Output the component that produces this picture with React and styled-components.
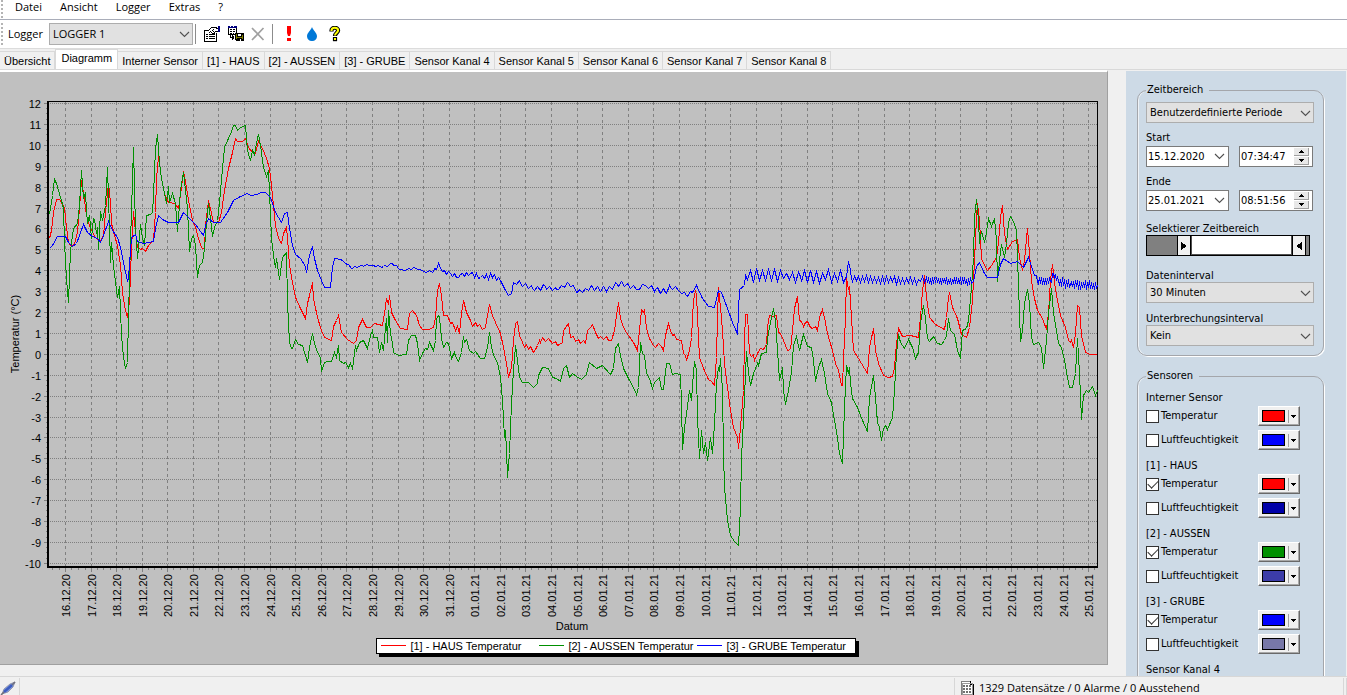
import React, { useState } from 'react';
import styled, { createGlobalStyle } from 'styled-components';

const GlobalStyle = createGlobalStyle`
    * {
        box-sizing: border-box;
    }

    body {
        margin: 0;
        background: #f0f0f0;
        color: #000;
        font: 11px/14px "DejaVu Sans Condensed", "DejaVu Sans", sans-serif;
    }

    button, input, select {
        font: inherit;
        color: inherit;
        margin: 0;
    }
`;

const uiFont = '"Open Sans", "Noto Sans", sans-serif';
const chartFont = '"Liberation Sans", Arial, sans-serif';

const Window = styled.div`
    display: flex;
    flex-direction: column;
    height: 100vh;
    overflow: hidden;
`;

const MenuBar = styled.nav`
    display: flex;
    align-items: center;
    height: 20px;
    padding: 0 0 5px 6px;
    background: #fff;
    border-bottom: 1px solid #a9adb9;
    font-family: ${uiFont};
`;

const MenuItem = styled.button`
    border: 0;
    padding: 0 9px;
    background: none;
    font-size: 11px;
`;

const ToolBar = styled.div`
    display: flex;
    align-items: center;
    height: 29px;
    padding: 0 8px;
    background: #fff;
    border-bottom: 1px solid #dcdcdc;
    font-family: ${uiFont};
`;

const ToolLabel = styled.label`
    width: 41px;
`;

const ToolButton = styled.button`
    display: flex;
    border: 0;
    padding: 0;
    margin-left: ${(p) => p.$gap || 7}px;
    background: none;

    svg {
        display: block;
    }
`;

const Separator = styled.div`
    width: 1px;
    height: 20px;
    margin-left: ${(p) => p.$gap || 2}px;
    background: #8c8c8c;
`;

const SelectBox = styled.div`
    position: relative;
    width: ${(p) => p.$width || 168}px;
    height: ${(p) => p.$height || 21}px;

    select {
        appearance: none;
        width: 100%;
        height: 100%;
        padding: 0 20px 0 3px;
        border: 1px solid #adadad;
        border-radius: 0;
        background: #e1e1e1;
    }

    svg {
        position: absolute;
        right: 3px;
        top: 50%;
        margin-top: -3px;
        pointer-events: none;
    }
`;

const TabStrip = styled.div`
    display: flex;
    align-items: flex-end;
    height: 21px;
    border-bottom: 1px solid #d9d9d9;
    font-family: ${chartFont};
`;

const Tab = styled.button`
    height: ${(p) => (p.$active ? 20 : 18)}px;
    padding: ${(p) => (p.$active ? '0 5px 3px' : '0 4px')};
    border: 1px solid #d9d9d9;
    border-left-width: ${(p) => (p.$active ? 1 : 0)}px;
    border-bottom: 0;
    background: ${(p) => (p.$active ? '#fff' : '#f0f0f0')};
    white-space: nowrap;
`;

const Main = styled.main`
    display: flex;
    flex: 1;
    min-height: 0;
    padding-right: 1px;
`;

const ChartPanel = styled.section`
    display: flex;
    flex-direction: column;
    flex: 1;
    min-width: 0;
    margin: 0 18px 11px 0;
    padding-bottom: 10px;
    background: #c0c0c0;
    border: solid #a0a0a0;
    border-width: 0 1px 1px 0;
    border-top: 2px solid #fff;

    > svg {
        display: block;
        flex: 1;
        min-height: 0;
        width: 100%;
    }
`;

const LegendBox = styled.ul`
    display: grid;
    grid-template-columns: repeat(3, 158px);
    width: 480px;
    height: 16px;
    margin: 0 0 0 34%;
    padding: 0 0 0 4px;
    list-style: none;
    background: #fff;
    border: 1px solid #000;
    box-shadow: 3px 3px 0 #000;
    font: 11px/14px ${chartFont};
`;

const LegendItem = styled.li`
    display: flex;
    align-items: center;
    gap: 4px;
    white-space: nowrap;
`;

const SidePanel = styled.aside`
    width: 220px;
    margin-top: 1px;
    padding: 12px 0 0 11px;
    overflow: hidden;
    background: #cddae6;
`;

const Group = styled.fieldset`
    width: 187px;
    min-width: 0;
    margin: 0 0 13px;
    padding: ${(p) => (p.$sensors ? '7px 0 0 8px' : '5px 0 9px 8px')};
    border: 1px solid #a4a6ab;
    border-radius: 10px;
    box-shadow: inset 1px 0 0 #eef2f6, 1px 1px 0 #fff;

    legend {
        padding: 0 6px 0 1px;
        height: 14px;
    }
`;

const Caption = styled.label`
    display: block;
    height: 14px;
    line-height: ${(p) => (p.$low ? 18 : 14)}px;
    margin: ${(p) => p.$top || 8}px 0 1px;
`;

const TimeRow = styled.div`
    display: flex;
    gap: 10px;
`;

const Field = styled.div`
    display: flex;
    align-items: center;
    width: ${(p) => p.$width}px;
    height: 21px;
    padding-right: 3px;
    border: 1px solid #7a7a7a;
    background: #fff;

    input {
        flex: 1;
        min-width: 0;
        padding: 0 0 0 1px;
        border: 0;
        background: none;
    }
`;

const DropButton = styled.button`
    display: flex;
    padding: 0;
    border: 0;
    background: none;
`;

const Spinner = styled.div`
    display: flex;
    flex-direction: column;
    gap: 1px;

    button {
        display: flex;
        align-items: center;
        justify-content: center;
        width: 15px;
        height: 8px;
        padding: 0;
        border: solid #a0a0a0;
        border-width: 0 1px 1px 0;
        background: #e8e8e8;
    }
`;

const RangeTrack = styled.div`
    position: relative;
    display: flex;
    width: 164px;
    height: 21px;
    margin-bottom: 11px;
    border: 1px solid #000;
    background: #808080;

    input {
        position: absolute;
        inset: 0;
        width: 100%;
        height: 100%;
        opacity: 0;
    }
`;

const RangeThumb = styled.span`
    display: flex;
    align-items: center;
    justify-content: center;
    width: 14px;
    background: #f0f0f0;
    border: 1px solid #000;
    border-width: 0 1px;
`;

const RangeSpan = styled.span`
    flex: ${(p) => p.$size};
    background: ${(p) => (p.$selected ? '#fff' : '#808080')};
    border: solid #505050;
    border-width: ${(p) => (p.$selected ? '0 1px 1px' : '0')};
`;

const SensorGroup = styled.div`
    height: 68px;
`;

const SensorName = styled.div`
    height: 15px;
    line-height: 16px;
`;

const SensorRow = styled.div`
    display: flex;
    align-items: center;
    justify-content: flex-end;
    height: 22px;
    margin-bottom: 2px;

    label {
        flex: 1;
        padding-left: 2px;
    }
`;

const CheckBox = styled.input`
    appearance: none;
    display: grid;
    place-items: center;
    width: 13px;
    height: 13px;
    border: 1px solid #333;
    background: #fff;

    &:checked::before {
        content: '';
        width: 9px;
        height: 5px;
        border: solid #333;
        border-width: 0 0 1px 1px;
        transform: translateY(-1px) rotate(-45deg);
    }
`;

const ColorButton = styled.button`
    display: flex;
    align-items: center;
    width: 42px;
    height: 20px;
    margin-right: 23px;
    padding: 0 3px;
    background: #f0f0f0;
    border: 1px solid;
    border-color: #fff #696969 #696969 #fff;
    box-shadow: inset -1px -1px 0 #a8a8a8;
`;

const Swatch = styled.span`
    width: 23px;
    height: 12px;
    background: ${(p) => p.$color};
    border: 1px solid #000;
`;

const SwatchDivider = styled.span`
    width: 1px;
    height: 13px;
    margin: 0 2px 0 3px;
    background: #a0a0a0;
`;

const StatusBar = styled.footer`
    display: flex;
    height: 19px;
    border-top: 1px solid #d7d7d7;
    font: 11px/14px ${uiFont};
`;

const StatusCell = styled.div`
    display: flex;
    align-items: center;
    gap: 5px;
    width: ${(p) => p.$width};
    flex: ${(p) => (p.$grow ? 1 : 'none')};
    margin-top: 1px;
    padding: 3px 0 0 ${(p) => p.$indent || 0}px;
    border-right: 1px solid #d7d7d7;
    white-space: nowrap;
`;

const Chevron = () => (
    <svg width="11" height="7" viewBox="0 0 11 7">
        <path d="M1 1l4.500 4.500L10 1" fill="none" stroke="#505050" strokeWidth="1.100" />
    </svg>
);

const Arrow = ({ points, width, height }) => (
    <svg width={width} height={height} viewBox={`0 0 ${width} ${height}`} shapeRendering="crispEdges">
        <polygon points={points} />
    </svg>
);

const Grip = styled.div`
    position: absolute;
    left: 1px;
    top: ${(p) => p.$top}px;
    width: 2px;
    height: ${(p) => p.$height}px;
    background: repeating-linear-gradient(#b4b4b4 0 2px, transparent 2px 4px);
`;

/* ---------- toolbar icons ---------- */

const PropertiesIcon = () => (
    <svg width="17" height="16" viewBox="0 0 17 16" shapeRendering="crispEdges">
        <rect x="0" y="4" width="12" height="11" fill="#fff" stroke="#000" transform="translate(.5 .5)" />
        <path d="M2 8h2v1H2zM5 8h6v1H5zM2 10h2v1H2zM5 10h6v1H5zM2 12h2v1H2zM5 12h6v1H5z" />
        <path d="M4 4l3-3h6l1 1v4l-3 2-2-3-3 1z" fill="#fff" />
        <path d="M4 4h1v1H4zM5 3h1v1H5zM6 2h1v1H6zM7 1h6v1H7zM12 2h2v1h-2zM6 5h1v1H6zM8 4h1v1H8zM7 6h1v1H7zM9 5h1v1H9zM10 6h1v1h-1zM11 5h3v1h-3zM9 3h1v1H9zM8 7h3v1H8zM5 6h1v1H5z" />
        <path d="M14 0h2v6h-2z" fill="#000080" />
    </svg>
);

const ExportIcon = () => (
    <svg width="16" height="16" viewBox="0 0 16 16" shapeRendering="crispEdges">
        <path d="M0 0h9v9H0z" />
        <path d="M0 0h9v2H0z" fill="#000080" />
        <path d="M2 0h1v1H2zM5 0h1v1H5zM1 2h7v6H1z" fill="#fff" />
        <path d="M2 3h2v1H2zM5 3h2v1H5zM2 5h2v1H2zM5 5h2v1H5zM2 7h2v1H2zM5 7h1v1H5zM2 9h1v3H2zM2 11h4v1H2zM4 9h1v5H4zM5 10h1v3H5z" />
        <path d="M7 7h9v8H8l-1-1z" />
        <path d="M8 8h1v5H8zM14 9h1v4h-1zM9 11h5v1H9z" fill="#808000" />
        <path d="M10 8h3v2h-3zM12 13h1v2h-1z" fill="#fff" />
    </svg>
);

const DeleteIcon = () => (
    <svg width="14" height="14" viewBox="0 0 14 14">
        <path d="M1 1l11.500 12M12.500 1L1 13" stroke="#a0a0a0" strokeWidth="1.700" fill="none" />
    </svg>
);

const AlarmIcon = () => (
    <svg width="6" height="16" viewBox="0 0 6 16">
        <path d="M1 0h4v7l-1 3H2L1 7zM1 12h4v3H1z" fill="#f00" />
    </svg>
);

const DropIcon = () => (
    <svg width="10" height="14" viewBox="0 0 10 14">
        <path d="M5 0c1 3 5 6 5 9.200A4.800 4.800 0 0 1 5 14 4.800 4.800 0 0 1 0 9.200C0 6 4 3 5 0z" fill="#0078d7" />
    </svg>
);

const HelpIcon = () => (
    <svg width="12" height="16" viewBox="0 0 12 16">
        <path d="M2.500 5.500V4.500a3.200 2.700 0 0 1 6.600 0C9.100 6.500 6 7 6 10" fill="none" stroke="#000" strokeWidth="4.200" />
        <path d="M3.900 11h4.200v4.200H3.900z" />
        <path d="M2.500 5V4.500a3.200 2.600 0 0 1 6.600 0C9.100 6.500 6 7 6 9.500" fill="none" stroke="#ff0" strokeWidth="2" />
        <path d="M5 12h2v2H5z" fill="#ff0" />
    </svg>
);

const PenIcon = () => (
    <svg width="16" height="15" viewBox="0 0 16 15">
        <path d="M2 13l2-5 6-5 5-2-2 5-5 5z" fill="#7f9be0" stroke="#8a8a9c" strokeWidth=".8" />
        <path d="M4 11l8-7" stroke="#3c5cc0" strokeWidth="2.500" />
        <path d="M1 14l3-3M12 4l3-3" stroke="#70707c" strokeWidth="1.500" />
    </svg>
);

const SheetIcon = () => (
    <svg width="13" height="15" viewBox="0 0 13 15" shapeRendering="crispEdges">
        <path d="M0 0h9l4 4v11H0z" fill="#fff" />
        <path d="M0 0h10v1H0zM0 0h1v15H0z" fill="#808080" />
        <path d="M9 0h1v3h3v12h-1V4H9z" />
        <path d="M2 4h2v2H2zM5 4h2v2H5zM8 4h2v2H8zM2 7h2v2H2zM5 7h2v2H5zM8 7h2v2H8zM2 10h2v2H2zM5 10h2v2H5zM8 10h2v2H8z" fill="#707070" />
        <path d="M1 2h10v11H1z" fill="none" stroke="#999" />
    </svg>
);

/* ---------- chart ---------- */

const haus = `49,238 51,230 53,212 56,199 59,199 62,204 64,208 66,227 68,242 71,246 74,243 77,232 79,208 81,180 83,192 86,215 90,228 95,237
100,241 103,235 105,212 108,183 110,202 111,223 114,235 117,245 120,265 122,292 125,310 127,317 129,300 131,248 133,211 135,232 137,247
140,249 142,248 145,251 148,245 153,240 155,212 156,178 158,156 159,162 161,178 164,193 168,202 174,203 178,208 181,187 183,171 186,187
189,205 192,220 195,227 198,238 201,247 204,249 205,225 208,200 211,213 213,222 218,222 221,212 224,190 228,168 232,152 235,138 237,141
242,141 245,138 248,147 252,152 255,153 258,141 262,148 266,158 269,168 271,185 273,205 275,225 278,238 281,243 283,233 286,227 287,238
289,265 292,282 295,297 300,308 305,318 307,303 309,295 312,282 313,298 317,317 321,330 324,337 331,340 333,326 336,320 338,315 341,332
347,339 353,343 356,340 358,327 362,319 366,327 370,327 374,323 382,325 384,313 386,298 388,304 389,295 391,312 395,320 400,328 407,329
409,313 412,310 416,315 419,325 422,329 428,329 433,327 435,317 437,290 439,283 441,295 443,315 447,315 450,323 452,322 455,330 457,326
459,333 461,313 463,300 466,312 470,320 472,326 475,322 477,326 479,324 482,329 485,327 487,315 489,304 492,315 495,322 500,333 503,347
506,363 508,377 511,367 513,340 515,323 517,321 519,335 522,342 524,347 526,344 528,349 530,346 533,352 535,349 537,345 539,340 540,342
542,337 545,341 548,338 552,343 555,341 557,345 559,344 562,342 563,330 568,323 570,337 573,336 575,341 578,339 580,343 583,340 585,343
587,330 590,327 592,324 595,332 598,338 600,336 603,339 606,336 608,340 611,340 614,330 616,315 618,302 620,318 623,327 626,332 628,335
633,342 637,350 639,330 641,309 643,312 644,310 646,328 649,338 653,345 655,347 658,343 661,346 663,350 665,335 668,323 670,330 672,335
674,334 676,339 681,340 683,353 685,355 686,360 689,350 691,337 693,300 695,290 696,295 698,337 699,357 703,368 708,379 711,381 714,385
716,357 717,317 718,287 720,307 722,330 724,363 727,387 730,410 733,427 737,437 738,448 740,427 743,390 744,340 745,314 747,314 749,353
751,356 753,354 754,360 757,353 760,348 763,349 766,344 767,327 769,315 772,316 776,315 778,332 780,333 783,340 787,350 790,349 792,330
794,308 797,296 799,320 801,321 803,326 805,322 807,321 810,327 812,328 815,326 817,330 819,317 822,309 824,317 827,333 832,350 835,363
838,370 841,385 842,385 843,360 845,317 846,278 848,289 849,286 851,317 853,350 858,358 867,373 869,347 873,328 875,350 878,363 883,375
888,377 892,376 894,367 896,343 898,328 902,336 910,335 918,337 920,317 922,290 924,275 926,297 929,317 935,324 944,329 946,317 948,297
949,292 952,307 957,318 961,334 966,337 969,327 972,300 974,260 976,217 977,203 979,220 981,258 983,263 987,270 991,265 996,257 998,242
1000,217 1002,205 1004,233 1007,249 1012,241 1017,239 1019,257 1022,270 1024,260 1026,238 1027,228 1029,253 1031,280 1034,298 1037,310
1042,318 1046,329 1048,313 1050,280 1052,264 1054,282 1057,300 1060,315 1065,327 1068,340 1070,342 1071,340 1073,347 1075,333 1077,305
1079,307 1081,335 1085,352 1090,354 1096,354`;

const aussen = `49,214 52,195 54,179 56,183 58,190 61,200 63,208 64,242 66,278 68,302 70,250 73,228 77,223 79,205 81,170 83,198 85,192 86,210
87,223 89,215 91,238 93,218 94,219 96,233 97,227 98,249 100,211 102,220 105,205 107,167 109,228 110,262 111,242 113,265 117,297 119,286
121,335 123,357 125,368 127,362 128,315 130,242 133,147 135,228 137,258 140,224 142,238 144,245 146,215 150,214 152,212 153,195 155,148
157,134 159,162 161,178 163,188 166,203 168,186 169,202 172,193 175,203 177,231 180,190 183,172 187,208 189,251 191,238 193,235 195,245
197,277 199,265 202,262 204,248 206,222 208,203 210,218 212,236 214,227 217,220 219,202 222,168 224,147 228,138 231,131 233,125 235,125
237,130 240,127 245,125 247,150 250,160 252,150 254,154 257,138 258,134 260,145 263,167 266,176 268,170 269,192 271,238 273,255 275,267
276,258 279,279 282,257 286,252 287,302 289,342 291,348 292,348 295,339 298,344 302,345 307,362 309,347 312,333 314,343 317,352 320,357
321,371 324,362 327,361 331,361 334,352 336,357 338,345 339,360 343,363 345,362 348,367 350,363 352,368 355,345 356,350 359,342 363,340
367,348 370,335 372,330 373,337 377,337 379,352 381,342 383,350 385,327 386,318 387,342 388,310 390,333 392,343 393,352 398,355 406,354
408,340 411,335 415,335 417,343 419,360 422,353 425,348 427,349 429,342 433,350 435,340 436,318 438,315 439,317 441,338 443,347 446,342
448,343 451,358 454,352 455,356 458,361 461,352 463,336 464,342 466,339 469,350 473,353 475,351 480,358 484,358 487,347 489,332 491,347
494,357 497,362 500,377 502,400 504,437 505,430 506,450 507,477 509,453 511,403 513,370 515,345 517,360 519,377 522,382 528,382 533,387
537,383 538,375 542,367 548,368 552,377 556,378 560,381 563,368 566,365 569,377 572,373 576,376 581,379 586,374 589,362 596,368 602,365
610,374 613,368 615,348 618,343 620,355 623,368 628,378 632,385 636,394 638,387 640,342 642,353 644,355 646,373 649,378 652,388 654,382
659,377 661,389 663,389 666,363 669,363 672,374 675,373 680,374 681,403 682,449 684,427 686,413 689,390 691,400 693,372 694,361 696,370
697,417 699,458 701,430 703,453 705,442 707,460 710,437 712,453 714,423 716,383 718,367 719,371 720,358 722,390 723,453 724,487 727,520
730,535 734,541 738,545 740,507 741,457 743,420 745,373 746,351 748,372 750,385 753,373 757,363 758,365 761,353 766,352 767,338 770,322
773,308 775,320 777,350 779,380 782,367 783,390 785,404 788,390 791,372 793,345 796,336 799,350 803,334 807,346 811,347 813,360 815,381
818,367 821,359 824,373 827,393 831,402 834,420 837,437 839,453 842,463 844,407 846,365 848,373 849,367 850,383 852,398 857,407 862,420
867,431 869,397 873,375 875,397 877,422 879,427 881,440 883,428 885,425 887,429 892,417 894,390 896,353 898,334 900,342 904,348 908,339
912,347 915,358 918,352 920,323 923,305 925,318 927,338 929,341 933,336 937,343 941,344 944,340 946,335 948,318 950,330 954,334 957,350
960,358 962,330 966,328 968,320 971,287 973,257 974,217 976,199 978,220 979,243 981,231 984,241 985,238 988,218 991,226 994,218 996,240
997,281 999,260 1001,244 1004,257 1006,243 1008,222 1010,216 1013,221 1016,230 1017,257 1019,313 1020,341 1022,330 1024,303 1027,289
1029,303 1031,337 1033,344 1038,342 1041,347 1043,368 1046,340 1048,313 1051,288 1053,312 1056,330 1058,343 1061,347 1064,360 1067,377
1069,387 1072,387 1075,373 1077,338 1079,373 1081,419 1083,395 1086,390 1088,392 1092,386 1095,395 1097,390`;

const grube = `49,248 52,245 57,236 65,236 68,242 72,246 76,243 79,235 83,224 87,232 92,236 97,238 100,242 103,235 108,221 112,230 117,237
120,247 123,262 127,281 128,277 131,237 135,234 137,241 143,243 153,241 155,228 158,215 162,219 168,222 178,222 183,212 188,217 195,224
203,235 205,225 208,218 213,222 220,222 227,212 233,200 240,196 247,193 250,195 257,194 260,192 265,192 270,197 275,212 281,222 284,213
287,212 289,228 292,245 295,254 300,258 305,266 306,272 309,255 312,246 314,258 317,270 321,280 324,287 330,287 332,267 334,258 340,259
347,264 352,268 362,265 373,265 383,266 392,263 398,268 403,270 413,267 423,271 433,271 439,265 442,271 450,273 458,277 462,273 470,273
480,277 493,275 500,280 505,290 508,295 511,293 513,282 520,283 532,288 545,286 556,289 568,283 578,291 592,287 607,289 617,284 628,285
636,289 645,285 655,289 665,292 670,287 678,290 686,295 692,292 696,285 702,298 708,306 714,307 718,290 721,292 727,308 732,322 736,331
737,334 739,289 744,285 745,275 800,276 846,276 848,261 851,278 920,281 922,276 925,280 973,281 976,266 979,262 984,273 987,277 997,277
1000,264 1003,258 1010,263 1017,261 1023,267 1028,257 1034,275 1037,281 1050,281 1053,273 1058,281 1070,284 1097,285`;

// ripple of the cellar sensor: x from, x to, amplitude, step
const ripples = [
    [340, 432, 1, 3],
    [432, 500, 3, 2],
    [515, 692, 3, 3],
    [744, 845, 7, 3],
    [850, 920, 4, 2],
    [924, 972, 4, 1],
    [1036, 1097, 5, 1],
];

const parse = (text) => text.trim().split(/\s+/).map((pair) => pair.split(',').map(Number));

const addRipple = (points) => {
    const out = [];
    let seed = 11;
    let sign = 1;
    points.forEach(([x, y], i) => {
        out.push([x, y]);
        const next = points[i + 1];
        if (!next) return;
        for (let px = x + 1; px < next[0]; px += 1) {
            const ripple = ripples.find(([from, to]) => px >= from && px < to);
            if (ripple && px % ripple[3] === 0) {
                seed = (seed * 73 + 41) % 997;
                sign = -sign;
                const base = y + ((next[1] - y) * (px - x)) / (next[0] - x);
                out.push([px, Math.round(base + sign * ripple[2] * (0.4 + (0.6 * seed) / 997))]);
            }
        }
    });
    return out;
};

const toLine = (points) => points.map((p) => p.join(',')).join(' ');

const series = [
    { name: '[1] - HAUS Temperatur', color: '#ff0000', points: toLine(parse(haus)) },
    { name: '[2] - AUSSEN Temperatur', color: '#009000', points: toLine(parse(aussen)) },
    { name: '[3] - GRUBE Temperatur', color: '#0000ff', points: toLine(addRipple(parse(grube))) },
];

const plot = { left: 48, right: 1097, top: 101, bottom: 567 };
const tempY = (t) => Math.round(103 + (12 - t) * 20.9) + 0.5;
const dayX = (d) => Math.round(65 + d * 25.58) + 0.5;

const temps = Array.from({ length: 23 }, (_, i) => 12 - i);
const days = Array.from({ length: 41 }, (_, i) => {
    const d = new Date(Date.UTC(2020, 11, 16 + i));
    const two = (n) => String(n).padStart(2, '0');
    return `${two(d.getUTCDate())}.${two(d.getUTCMonth() + 1)}.${two(d.getUTCFullYear() % 100)}`;
});

const AxisText = styled.text`
    font: 11px ${chartFont};
    text-anchor: ${(p) => p.$anchor || 'start'};
`;

const Chart = () => (
    <svg viewBox="0 72 1107 566" role="img" aria-label="Temperaturverlauf">
        <g shapeRendering="crispEdges" stroke="#808080" fill="none">
            {temps.map((t) => (
                <g key={t}>
                    <path d={`M50 ${tempY(t)}H${plot.right}`} strokeDasharray="1 1" />
                    <path d={`M44 ${tempY(t)}H${plot.left}`} />
                    {t > -10 && [5, 10, 16].map((o) => (
                        <path key={o} d={`M46 ${tempY(t) + o}H${plot.left}`} />
                    ))}
                </g>
            ))}
            {days.map((label, i) => (
                <g key={label}>
                    <path d={`M${dayX(i)} 102V566`} strokeDasharray="3 3" />
                    <path d={`M${dayX(i)} 568V572`} />
                    {[-13, -6, 6].map((o) => (
                        <path key={o} d={`M${dayX(i) + o} 568V570`} />
                    ))}
                </g>
            ))}
        </g>
        <g shapeRendering="crispEdges" fill="none" stroke="#000">
            <path d={`M48 ${plot.top + 0.5}H${plot.right + 0.5}V${plot.bottom}`} />
            <path d="M48 101V568M47 567H1098" strokeWidth="2" />
        </g>
        <g shapeRendering="crispEdges" fill="none">
            {series.map((s) => (
                <polyline key={s.name} points={s.points} stroke={s.color} transform="translate(.5 .5)" />
            ))}
        </g>
        {temps.map((t) => (
            <AxisText key={t} x="41" y={tempY(t) + 4} $anchor="end">{t}</AxisText>
        ))}
        {days.map((label, i) => (
            <AxisText key={label} transform={`translate(${dayX(i) + 4} 617) rotate(-90)`}>{label}</AxisText>
        ))}
        <AxisText transform="translate(19 334) rotate(-90)" $anchor="middle">Temperatur (°C)</AxisText>
        <AxisText x="572" y="630" $anchor="middle">Datum</AxisText>
    </svg>
);

/* ---------- page ---------- */

const menus = ['Datei', 'Ansicht', 'Logger', 'Extras', '?'];

const tabs = [
    'Übersicht', 'Diagramm', 'Interner Sensor', '[1] - HAUS', '[2] - AUSSEN', '[3] - GRUBE',
    'Sensor Kanal 4', 'Sensor Kanal 5', 'Sensor Kanal 6', 'Sensor Kanal 7', 'Sensor Kanal 8',
];

const sensors = [
    { name: 'Interner Sensor', on: false, colors: ['#ff0000', '#0000ff'] },
    { name: '[1]  - HAUS', on: true, colors: ['#ff0000', '#0000a8'] },
    { name: '[2]  - AUSSEN', on: true, colors: ['#009000', '#3c3ca8'] },
    { name: '[3]  - GRUBE', on: true, colors: ['#0000ff', '#7878a8'] },
];

const Select = ({ id, value, width, height, label }) => (
    <SelectBox $width={width} $height={height}>
        <select id={id} defaultValue={value} aria-label={label}>
            <option>{value}</option>
        </select>
        <Chevron />
    </SelectBox>
);

const DateTime = ({ id, date, time, label }) => (
    <TimeRow>
        <Field $width={83}>
            <input id={id} defaultValue={date} />
            <DropButton aria-label={`${label} Kalender`}><Chevron /></DropButton>
        </Field>
        <Field $width={74}>
            <input defaultValue={time} aria-label={`${label} Uhrzeit`} />
            <Spinner>
                <button aria-label="mehr"><Arrow width={5} height={3} points="0,3 2.500,0 5,3" /></button>
                <button aria-label="weniger"><Arrow width={5} height={3} points="0,0 2.500,3 5,0" /></button>
            </Spinner>
        </Field>
    </TimeRow>
);

const ColorPicker = ({ label, color }) => (
    <ColorButton aria-label={`Farbe ${label}`}>
        <Swatch $color={color} />
        <SwatchDivider />
        <Arrow width={5} height={3} points="0,0 2.500,3 5,0" />
    </ColorButton>
);

const SensorOption = ({ id, label, on, color }) => (
    <SensorRow>
        <CheckBox type="checkbox" id={id} defaultChecked={on} />
        <label htmlFor={id}>{label}</label>
        <ColorPicker label={label} color={color} />
    </SensorRow>
);

const App = () => {
    const [active, setActive] = useState('Diagramm');

    return (
        <Window>
            <GlobalStyle />
            <Grip $top={0} $height={18} />
            <Grip $top={23} $height={24} />
            <MenuBar>
                {menus.map((m) => <MenuItem key={m}>{m}</MenuItem>)}
            </MenuBar>
            <ToolBar>
                <ToolLabel htmlFor="logger">Logger</ToolLabel>
                <Select id="logger" value="LOGGER 1" width={144} height={22} />
                <Separator />
                <ToolButton $gap={8} aria-label="Eigenschaften"><PropertiesIcon /></ToolButton>
                <ToolButton aria-label="Exportieren"><ExportIcon /></ToolButton>
                <ToolButton aria-label="Löschen"><DeleteIcon /></ToolButton>
                <Separator $gap={7} />
                <ToolButton $gap={13} aria-label="Alarme"><AlarmIcon /></ToolButton>
                <ToolButton $gap={15} aria-label="Feuchte"><DropIcon /></ToolButton>
                <ToolButton $gap={12} aria-label="Hilfe"><HelpIcon /></ToolButton>
            </ToolBar>
            <TabStrip role="tablist">
                {tabs.map((t) => (
                    <Tab key={t} role="tab" aria-selected={t === active} $active={t === active} onClick={() => setActive(t)}>
                        {t}
                    </Tab>
                ))}
            </TabStrip>
            <Main>
                <ChartPanel>
                    <Chart />
                    <LegendBox>
                        {series.map((s) => (
                            <LegendItem key={s.name}>
                                <svg width="25" height="2" viewBox="0 0 25 2" shapeRendering="crispEdges">
                                    <rect width="25" height="1" fill={s.color} />
                                </svg>
                                {s.name}
                            </LegendItem>
                        ))}
                    </LegendBox>
                </ChartPanel>
                <SidePanel>
                    <Group>
                        <legend>Zeitbereich</legend>
                        <Select value="Benutzerdefinierte Periode" label="Zeitbereich" />
                        <Caption htmlFor="start">Start</Caption>
                        <DateTime id="start" date="15.12.2020" time="07:34:47" label="Start" />
                        <Caption htmlFor="ende">Ende</Caption>
                        <DateTime id="ende" date="25.01.2021" time="08:51:56" label="Ende" />
                        <Caption htmlFor="von" $top={9} $low>Selektierer Zeitbereich</Caption>
                        <RangeTrack>
                            <RangeSpan $size={30} />
                            <RangeThumb><Arrow width={6} height={8} points="0,0 6,4 0,8" /></RangeThumb>
                            <RangeSpan $size={101} $selected />
                            <RangeThumb><Arrow width={6} height={8} points="6,0 0,4 6,8" /></RangeThumb>
                            <RangeSpan $size={3} />
                            <input type="range" id="von" defaultValue="22" />
                            <input type="range" aria-label="bis" defaultValue="96" />
                        </RangeTrack>
                        <Caption htmlFor="daten" $low>Dateninterval</Caption>
                        <Select id="daten" value="30 Minuten" />
                        <Caption htmlFor="unterbrechung" $top={7} $low>Unterbrechungsinterval</Caption>
                        <Select id="unterbrechung" value="Kein" />
                    </Group>
                    <Group $sensors>
                        <legend>Sensoren</legend>
                        {sensors.map((s) => (
                            <SensorGroup key={s.name}>
                                <SensorName>{s.name}</SensorName>
                                <SensorOption id={`${s.name}-t`} label="Temperatur" on={s.on} color={s.colors[0]} />
                                <SensorOption id={`${s.name}-f`} label="Luftfeuchtigkeit" color={s.colors[1]} />
                            </SensorGroup>
                        ))}
                        <SensorGroup>
                            <SensorName>Sensor Kanal 4</SensorName>
                            <SensorRow>
                                <ColorPicker label="Sensor Kanal 4" color="#ff0000" />
                            </SensorRow>
                        </SensorGroup>
                    </Group>
                </SidePanel>
            </Main>
            <StatusBar>
                <StatusCell $width="20px"><PenIcon /></StatusCell>
                <StatusCell $grow />
                <StatusCell $width="389px" $indent={6}>
                    <SheetIcon />
                    1329 Datensätze / 0 Alarme / 0 Ausstehend
                </StatusCell>
                <StatusCell $width="3px" />
            </StatusBar>
        </Window>
    );
};

export default App;
